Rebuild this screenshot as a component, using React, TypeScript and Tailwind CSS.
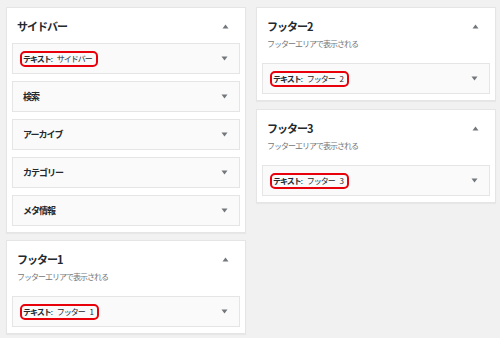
import React from "react";

type Widget = { name: string; sub?: string; marked?: boolean };

type Area = { title: string; desc?: string; widgets: Widget[] };

const left: Area[] = [
  {
    title: "サイドバー",
    widgets: [
      { name: "テキスト", sub: "サイドバー", marked: true },
      { name: "検索" },
      { name: "アーカイブ" },
      { name: "カテゴリー" },
      { name: "メタ情報" },
    ],
  },
  {
    title: "フッター1",
    desc: "フッターエリアで表示される",
    widgets: [{ name: "テキスト", sub: "フッター 1", marked: true }],
  },
];

const right: Area[] = [
  {
    title: "フッター2",
    desc: "フッターエリアで表示される",
    widgets: [{ name: "テキスト", sub: "フッター 2", marked: true }],
  },
  {
    title: "フッター3",
    desc: "フッターエリアで表示される",
    widgets: [{ name: "テキスト", sub: "フッター 3", marked: true }],
  },
];

function Arrow({ up }: { up?: boolean }) {
  return (
    <svg width="7" height="5" viewBox="0 0 7 5" className="shrink-0">
      {up ? (
        <path d="M0.5 4.5 L3.5 0.5 L6.5 4.5 Z" fill="#72777c" />
      ) : (
        <path d="M0.5 0.5 L3.5 4.5 L6.5 0.5 Z" fill="#72777c" />
      )}
    </svg>
  );
}

function WidgetRow({ w }: { w: Widget }) {
  return (
    <div className="h-[31px] flex items-center justify-between bg-[#fafafa] border border-[#e5e5e5] pl-[10px] pr-[11px]">
      {w.marked ? (
        // red marker drawn round the text widget's title
        <span className="-ml-[3px] h-[16px] border-2 border-[#e8000b] rounded-[5px] pl-[1px] pr-[4px] flex items-center text-[8px] leading-[10px] tracking-[-1px] [word-spacing:4px] text-[#23282d] whitespace-pre">
          <span className="font-bold">{w.name}</span>
          <span>{": " + w.sub}</span>
        </span>
      ) : (
        <span className="text-[9px] leading-[11px] tracking-[-1px] font-bold text-[#23282d] whitespace-nowrap">
          {w.name}
        </span>
      )}
      <Arrow />
    </div>
  );
}

function Panel({ a }: { a: Area }) {
  return (
    <div className="bg-white border border-[#e5e5e5] px-[5px] pt-[11px] pb-[6px] shadow-[0_1px_1px_rgba(0,0,0,0.04)]">
      <div className="flex items-center justify-between pl-[5px] pr-[11px] h-[14px]">
        <h2 className="text-[11px] leading-[14px] font-bold tracking-[-1px] text-[#23282d]">
          {a.title}
        </h2>
        <Arrow up />
      </div>
      {a.desc ? (
        <p className="pl-[5px] mt-[5px] mb-[13px] text-[8px] leading-[12px] tracking-[-1px] text-[#72777c]">
          {a.desc}
        </p>
      ) : (
        <div className="h-[10px]" />
      )}
      <div className="flex flex-col gap-[7px]">
        {a.widgets.map((w, i) => (
          <WidgetRow key={i} w={w} />
        ))}
      </div>
    </div>
  );
}

export default function App() {
  return (
    <div
      className="w-[500px] h-[338px] overflow-hidden bg-[#f1f1f1] pl-[6px] pt-[7px] flex gap-[10px]"
      style={{ fontFamily: '"Noto Sans CJK JP", "Noto Sans", sans-serif' }}
    >
      <div className="w-[240px] flex flex-col gap-[7px]">
        {left.map((a, i) => (
          <Panel key={i} a={a} />
        ))}
      </div>
      <div className="w-[240px] flex flex-col gap-[8px] self-start">
        {right.map((a, i) => (
          <Panel key={i} a={a} />
        ))}
      </div>
    </div>
  );
}
